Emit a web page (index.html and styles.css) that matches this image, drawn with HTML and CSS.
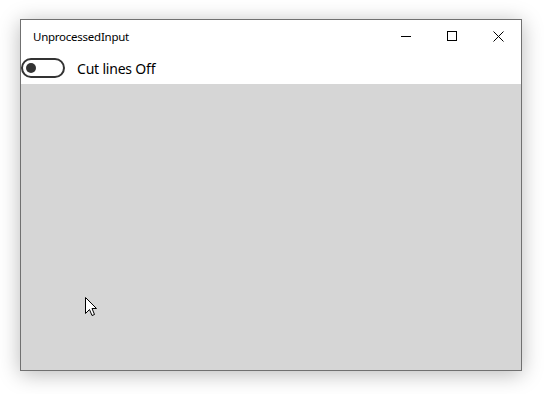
FILE: index.html
```html
<!DOCTYPE html>
<html>
<head>
    <title>UnprocessedInput</title>
    <link rel="stylesheet" href="styles.css">
</head>
<body>
    <section class="window">
        <header class="titlebar">
            <span class="title">UnprocessedInput</span>
            <span class="caption-buttons">
                <span class="caption-btn">
                    <svg width="10" height="10" viewBox="0 0 10 10"><path d="M0 5.5 H10" stroke="#000" stroke-width="1"/></svg>
                </span>
                <span class="caption-btn">
                    <svg width="10" height="10" viewBox="0 0 10 10"><rect x="0.5" y="0.5" width="9" height="9" fill="none" stroke="#000" stroke-width="1"/></svg>
                </span>
                <span class="caption-btn">
                    <svg width="11" height="11" viewBox="0 0 11 11"><path d="M0.5 0.5 L10.5 10.5 M10.5 0.5 L0.5 10.5" stroke="#000" stroke-width="1"/></svg>
                </span>
            </span>
        </header>
        <section class="toolbar">
            <span class="toggle"><span class="knob"></span></span>
            <label class="toggle-label">Cut lines Off</label>
        </section>
        <section class="canvas">
            <svg class="cursor" width="13" height="21" viewBox="0 0 13 21">
                <path d="M0.5 0.5 L0.5 16.5 L4.5 12.5 L7 18.5 L9.5 17.5 L7 11.5 L11.5 11.5 Z" fill="#fff" stroke="#000" stroke-width="1" stroke-linejoin="miter"/>
            </svg>
        </section>
    </section>
</body>
</html>
```

FILE: styles.css
```css
html, body {
    height: 100%;
}
body {
    margin: 0;
    box-sizing: border-box;
    padding: 19px 0 0 20px;
    background: #fff;
    font-family: "Noto Sans", "Open Sans", sans-serif;
}
.window {
    box-sizing: border-box;
    width: 502px;
    height: 352px;
    border: 1px solid #707070;
    background: #fff;
    display: flex;
    flex-direction: column;
    box-shadow: 0 3px 20px rgba(0, 0, 0, 0.28);
}
.titlebar {
    height: 32px;
    display: flex;
    align-items: center;
    justify-content: space-between;
}
.title {
    padding-left: 12px;
    font-size: 11.5px;
    letter-spacing: -0.25px;
    color: #000;
}
.caption-buttons {
    display: flex;
    height: 100%;
}
.caption-btn {
    width: 46px;
    height: 100%;
    display: flex;
    align-items: center;
    justify-content: center;
}
.toolbar {
    height: 32px;
    display: flex;
    align-items: center;
}
.toggle {
    box-sizing: border-box;
    width: 44px;
    height: 20px;
    border: 2px solid #333;
    border-radius: 10px;
    display: flex;
    align-items: center;
    padding-left: 3px;
}
.knob {
    width: 10px;
    height: 10px;
    border-radius: 50%;
    background: #333;
}
.toggle-label {
    margin-left: 12px;
    font-size: 14px;
    letter-spacing: -0.2px;
    color: #000;
}
.canvas {
    flex: 1;
    background: #d6d6d6;
    position: relative;
}
.cursor {
    position: absolute;
    left: 64px;
    top: 213px;
}
```
